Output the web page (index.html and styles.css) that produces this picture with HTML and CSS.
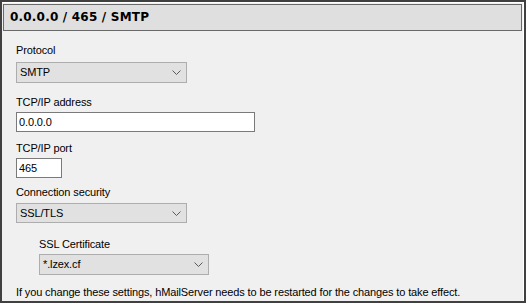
FILE: index.html
```html
<!DOCTYPE html>
<html lang="en">
  <head>
    <meta charset="UTF-8" />
    <meta name="viewport" content="width=device-width, initial-scale=1.0" />
    <title>TCP/IP port - SMTP</title>
    <link rel="stylesheet" href="styles.css">
  </head>
  <body>
    <div class="panel">
      <div class="header">0.0.0.0 / 465 / SMTP</div>

      <div class="form">
        <div class="field field-protocol">
          <label>Protocol</label>
          <div class="select select-wide">
            <span>SMTP</span>
            <svg class="chevron" width="9" height="5" viewBox="0 0 9 5">
              <polyline points="0.5 0.5 4.5 4.5 8.5 0.5" fill="none" stroke="#5a5a5a" stroke-width="1"></polyline>
            </svg>
          </div>
        </div>

        <div class="field field-address">
          <label for="address">TCP/IP address</label>
          <input type="text" id="address" class="input input-address" value="0.0.0.0" />
        </div>

        <div class="field field-port">
          <label for="port">TCP/IP port</label>
          <input type="text" id="port" class="input input-port" value="465" />
        </div>

        <div class="field field-security">
          <label>Connection security</label>
          <div class="select select-wide">
            <span>SSL/TLS</span>
            <svg class="chevron" width="9" height="5" viewBox="0 0 9 5">
              <polyline points="0.5 0.5 4.5 4.5 8.5 0.5" fill="none" stroke="#5a5a5a" stroke-width="1"></polyline>
            </svg>
          </div>
        </div>

        <div class="field field-cert">
          <label>SSL Certificate</label>
          <div class="select select-cert">
            <span>*.lzex.cf</span>
            <svg class="chevron" width="9" height="5" viewBox="0 0 9 5">
              <polyline points="0.5 0.5 4.5 4.5 8.5 0.5" fill="none" stroke="#5a5a5a" stroke-width="1"></polyline>
            </svg>
          </div>
        </div>

        <p class="note">If you change these settings, hMailServer needs to be restarted for the changes to take effect.</p>
      </div>
    </div>
  </body>
</html>
```

FILE: styles.css
```css
:root {
  --frame: #404040;
  --panel: #f0f0f0;
  --header-bg: #dfdfdf;
  --header-border: #696969;
  --select-bg: #e1e1e1;
  --select-border: #adadad;
  --input-border: #7a7a7a;
  --text: #000000;
}

* {
  margin: 0;
  padding: 0;
  box-sizing: border-box;
}

body {
  font-family: 'Liberation Sans', Arial, sans-serif;
  font-size: 11px;
  line-height: 13px;
  letter-spacing: -0.13px;
  color: var(--text);
  background-color: var(--frame);
}

.panel {
  width: 526px;
  height: 303px;
  border: 2px solid var(--frame);
  background-color: var(--panel);
  box-shadow: inset 0 1px #ffffff, inset -1px 0 #ffffff;
  display: flex;
  flex-direction: column;
}

.header {
  height: 27px;
  margin: 2px 2px 0 1px;
  padding-left: 6px;
  border: 1px solid var(--header-border);
  background-color: var(--header-bg);
  font-family: 'DejaVu Sans', Verdana, sans-serif;
  font-weight: bold;
  font-size: 12px;
  letter-spacing: 0.2px;
  display: flex;
  align-items: center;
}

.form {
  display: flex;
  flex-direction: column;
  padding-left: 14px;
  padding-top: 13px;
}

.field {
  display: flex;
  flex-direction: column;
  align-items: flex-start;
}

label {
  display: block;
  margin-bottom: 3px;
}

.field-protocol label {
  margin-bottom: 5px;
}

.field-address {
  margin-top: 13px;
}

.field-port {
  margin-top: 10px;
}

.field-security {
  margin-top: 8px;
}

.field-security label {
  margin-bottom: 4px;
}

.field-cert {
  margin-top: 15px;
  padding-left: 23px;
}

.select {
  height: 21px;
  background-color: var(--select-bg);
  border: 1px solid var(--select-border);
  display: flex;
  align-items: center;
  justify-content: space-between;
  padding: 0 5px 0 3px;
}

.select-wide {
  width: 171px;
}

.field-security .select {
  height: 20px;
}

.select-cert {
  width: 170px;
}

.input {
  height: 20px;
  border: 1px solid var(--input-border);
  background-color: #ffffff;
  font-family: inherit;
  font-size: 11px;
  letter-spacing: inherit;
  color: var(--text);
  padding: 0 2px;
  outline: none;
}

.input-address {
  width: 239px;
}

.input-port {
  width: 46px;
}

.note {
  margin-top: 11px;
}
```
